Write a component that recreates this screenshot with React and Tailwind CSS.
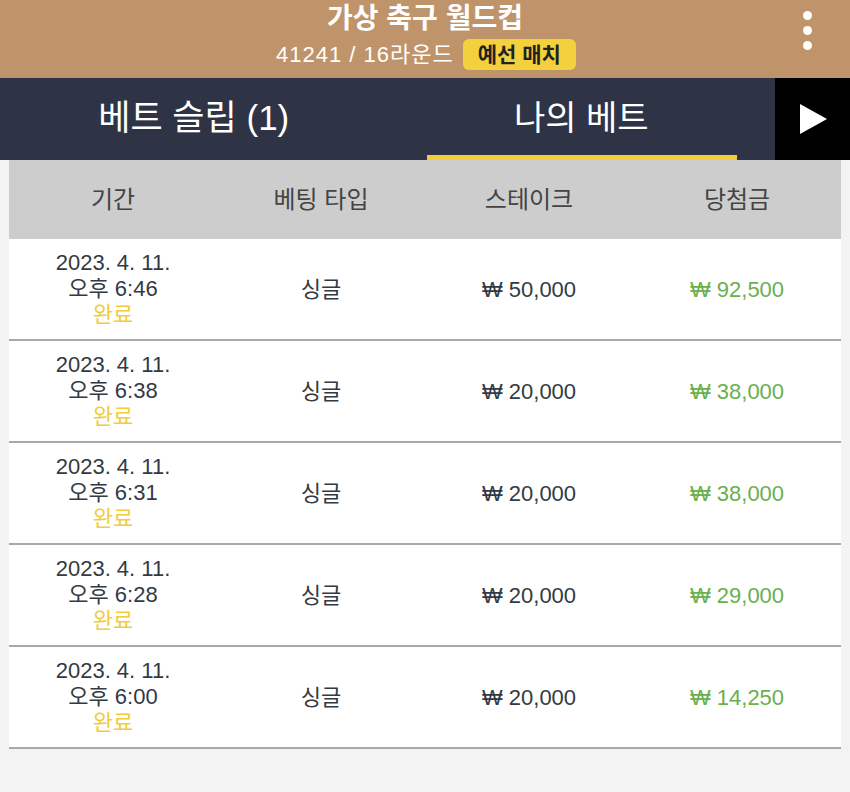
import React from 'react';

const rows = [
  { time: '오후 6:46', stake: '50,000', win: '92,500' },
  { time: '오후 6:38', stake: '20,000', win: '38,000' },
  { time: '오후 6:31', stake: '20,000', win: '38,000' },
  { time: '오후 6:28', stake: '20,000', win: '29,000' },
  { time: '오후 6:00', stake: '20,000', win: '14,250' },
];

const font = { fontFamily: '"Liberation Sans", "Noto Sans CJK KR", sans-serif' };

export default function App() {
  return (
    <div className="w-[850px] h-[792px] bg-[#f3f3f3] overflow-hidden" style={font}>
      {/* top header */}
      <div className="relative h-[78px] bg-[#c0946b] flex flex-col items-center">
        <div className="text-white font-bold text-[28px] leading-none mt-[5px]">가상 축구 월드컵</div>
        <div className="flex items-center gap-[9px] mt-[6px] ml-[2px]">
          <span className="text-white text-[22px] leading-none tracking-[1px]">41241 / 16라운드</span>
          <span className="bg-[#f4d13c] text-[#222] font-bold text-[21px] leading-none rounded-[6px] px-[15px] py-[5px]">예선 매치</span>
        </div>
        <div className="absolute right-[38px] top-[11px] flex flex-col gap-[6px]">
          <span className="w-[9px] h-[9px] rounded-full bg-white" />
          <span className="w-[9px] h-[9px] rounded-full bg-white" />
          <span className="w-[9px] h-[9px] rounded-full bg-white" />
        </div>
      </div>

      {/* tabs */}
      <div className="flex h-[82px] bg-[#2e3445]">
        <div className="flex flex-1">
          <div className="flex-1 flex items-center justify-center text-white text-[35px] pb-[2px]">베트 슬립 (1)</div>
          <div className="flex-1 flex flex-col items-center">
            <div className="flex-1 flex items-center text-white text-[34px] pt-[3px]">나의 베트</div>
            <div className="w-[310px] h-[5px] bg-[#f2cc3a] ml-[2px]" />
          </div>
        </div>
        <div className="w-[75px] bg-black flex items-center justify-center">
          <svg width="30" height="32" viewBox="0 0 30 32">
            <path d="M2 1 L29 16 L2 31 Z" fill="white" />
          </svg>
        </div>
      </div>

      {/* table */}
      <div className="mx-[9px]">
        <div className="grid grid-cols-4 h-[79px] bg-[#cdcdcd] text-[#444] text-[24px] items-center text-center">
          <div>기간</div>
          <div>베팅 타입</div>
          <div>스테이크</div>
          <div>당첨금</div>
        </div>
        {rows.map((r, i) => (
          <div
            key={i}
            className="grid grid-cols-4 h-[102px] bg-white border-b-2 border-[#a8a8b0] items-center text-center text-[22px] text-[#333a45]"
          >
            <div className="flex flex-col items-center leading-[26px]">
              <span>2023. 4. 11.</span>
              <span>{r.time}</span>
              <span className="text-[#f2cc3a]">완료</span>
            </div>
            <div>싱글</div>
            <div>₩ {r.stake}</div>
            <div className="text-[#6ab04c]">₩ {r.win}</div>
          </div>
        ))}
      </div>
    </div>
  );
}
